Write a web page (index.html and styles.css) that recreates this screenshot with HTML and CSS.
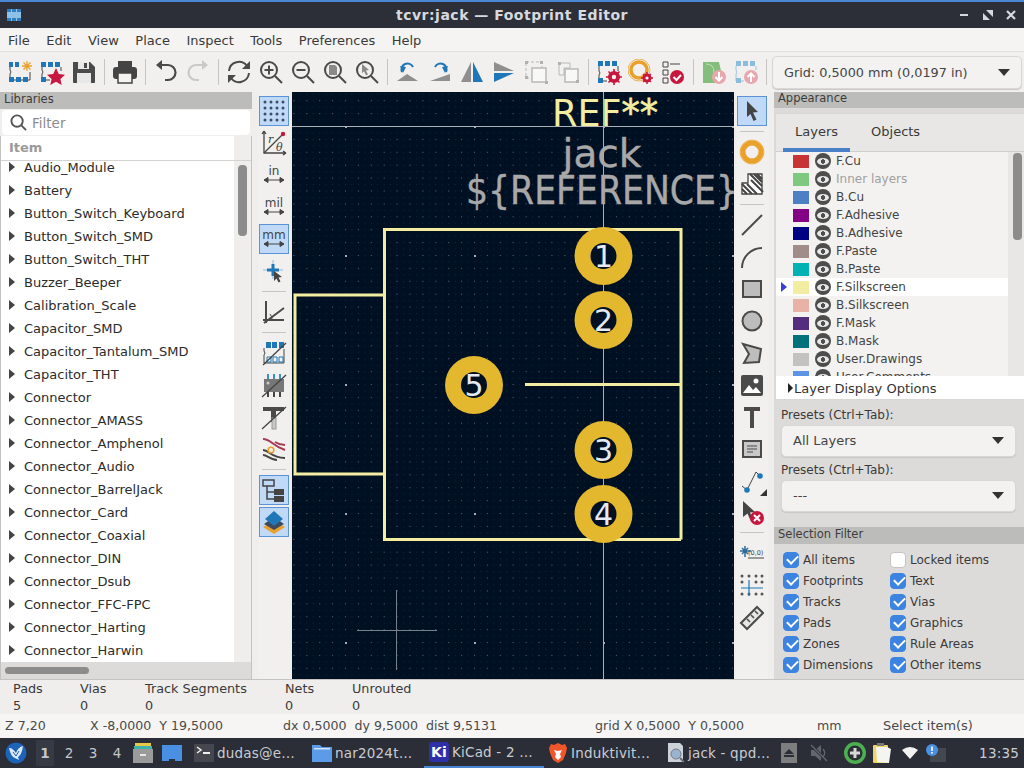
FILE: index.html
```html
<!DOCTYPE html>
<html lang="en">
<head>
<meta charset="utf-8">
<title>tcvr:jack — Footprint Editor</title>
<link rel="stylesheet" href="styles.css">
</head>
<body>
<div class="app">
  <header class="titlebar">
    <svg class="app-icon" width="18" height="18" viewBox="0 0 18 18"><rect x="2" y="3" width="14" height="12" fill="#8fc0e8"/><path d="M2 3h4v3H2zM7 3h4v3H7zM12 3h4v3h-4zM2 12h4v3H2zM7 12h4v3H7zM12 12h4v3h-4z" fill="#2f7fc0"/></svg>
    <div class="title">tcvr:jack — Footprint Editor</div>
    <div class="wm-buttons">
      <svg width="14" height="14" viewBox="0 0 14 14"><rect x="2" y="6" width="8" height="2" fill="#d5d8de"/></svg>
      <svg width="14" height="14" viewBox="0 0 14 14"><path d="M5 2h7v7zM2 5l7 7H2z" fill="#d5d8de"/></svg>
      <svg width="14" height="14" viewBox="0 0 14 14"><path d="M3 3l8 8M11 3l-8 8" stroke="#d5d8de" stroke-width="2.2"/></svg>
    </div>
  </header>

  <nav class="menubar">
    <span>File</span><span>Edit</span><span>View</span><span>Place</span><span>Inspect</span><span>Tools</span><span>Preferences</span><span>Help</span>
  </nav>

  <div class="toolbar">
    <button class="tb"><svg width="26" height="26" viewBox="0 0 26 26"><path d="M3 6v5q2 2 0 4v6h20V13" fill="none" stroke="#444" stroke-width="1"/><path d="M2 3h4v5H2zM8 3h4v5H8zM2 18h5v5H2zM9 18h5v5H9zM16 18h5v5h-5z" fill="#1f77b8"/><path d="M20 2v10M15 7h10M16.500 3.500l7 7M23.500 3.500l-7 7" stroke="#eaa12c" stroke-width="1.300"/></svg></button>
    <button class="tb"><svg width="26" height="26" viewBox="0 0 26 26"><path d="M3 6v5q2 2 0 4v6h8M22 8v4" fill="none" stroke="#444" stroke-width="1"/><path d="M2 3h5v5H2zM9 3h5v5H9zM16 3h5v5h-5zM2 18h5v5H2z" fill="#1f77b8"/><path d="M17 9l2.800 6 6.200.7-4.600 4.200 1.300 6-5.700-3.100-5.700 3.100 1.300-6L8 15.700l6.200-.7z" fill="#c8173f"/></svg></button>
    <button class="tb"><svg width="24" height="24" viewBox="0 0 24 24"><path d="M1 2h17l5 5v15a1 1 0 0 1-1 1H2a1 1 0 0 1-1-1z" fill="#4a4a4a"/><rect x="6" y="2" width="11" height="7" fill="#e8e8e8"/><rect x="12" y="3" width="3" height="5" fill="#4a4a4a"/><rect x="5" y="13" width="14" height="10" fill="#e8e8e8"/></svg></button>
    <i class="sep"></i>
    <button class="tb"><svg width="26" height="26" viewBox="0 0 26 26"><rect x="6" y="2" width="14" height="7" fill="#444"/><rect x="1" y="8" width="24" height="12" rx="3" fill="#444"/><rect x="6" y="14" width="14" height="10" fill="#f4f3f1" stroke="#444" stroke-width="1.500"/></svg></button>
    <i class="sep"></i>
    <button class="tb"><svg width="24" height="24" viewBox="0 0 24 24"><path d="M7 5h7a7.500 7.500 0 0 1 0 15h-3" fill="none" stroke="#4a4a4a" stroke-width="2.200"/><path d="M8 0v10L2 5z" fill="#4a4a4a"/></svg></button>
    <button class="tb"><svg width="24" height="24" viewBox="0 0 24 24"><path d="M17 5h-7a7.500 7.500 0 0 0 0 15h3" fill="none" stroke="#c9c9c7" stroke-width="2.200"/><path d="M16 0v10l6-5z" fill="#c9c9c7"/></svg></button>
    <i class="sep"></i>
    <button class="tb"><svg width="26" height="26" viewBox="0 0 26 26"><path d="M3 12a10 10 0 0 1 18-5M23 14a10 10 0 0 1-18 5" fill="none" stroke="#4a4a4a" stroke-width="2"/><path d="M24 2v8h-8zM2 24v-8h8z" fill="#4a4a4a"/></svg></button>
    <button class="tb"><svg width="24" height="24" viewBox="0 0 24 24"><circle cx="10" cy="10" r="8" fill="none" stroke="#4a4a4a" stroke-width="2"/><path d="M16 16l7 7M10 5.500v9M5.500 10h9" stroke="#4a4a4a" stroke-width="2"/></svg></button>
    <button class="tb"><svg width="24" height="24" viewBox="0 0 24 24"><circle cx="10" cy="10" r="8" fill="none" stroke="#4a4a4a" stroke-width="2"/><path d="M16 16l7 7M5.500 10h9" stroke="#4a4a4a" stroke-width="2"/></svg></button>
    <button class="tb"><svg width="24" height="24" viewBox="0 0 24 24"><circle cx="10" cy="10" r="8" fill="none" stroke="#4a4a4a" stroke-width="2"/><path d="M16 16l7 7" stroke="#4a4a4a" stroke-width="2"/><path d="M6 5h6l2 2v8H6z" fill="#8a8a8a"/></svg></button>
    <button class="tb"><svg width="24" height="24" viewBox="0 0 24 24"><circle cx="10" cy="10" r="8" fill="none" stroke="#4a4a4a" stroke-width="2"/><path d="M16 16l7 7" stroke="#4a4a4a" stroke-width="2"/><path d="M7 4l7 6-3 .5 2 4-2 .8-2-4-2 2z" fill="#8a8a8a"/></svg></button>
    <i class="sep"></i>
    <button class="tb"><svg width="24" height="24" viewBox="0 0 24 24"><path d="M1 21l10-7 11 7z" fill="#8f8f8f"/><path d="M6 11a6 6 0 0 1 11-5" fill="none" stroke="#1f77b8" stroke-width="2" transform="translate(0 1)"/><path d="M4 6l6 1-3 6z" fill="#1f77b8"/></svg></button>
    <button class="tb"><svg width="24" height="24" viewBox="0 0 24 24"><path d="M2 21l20-7v7z" fill="#8f8f8f"/><path d="M18 11a6 6 0 0 0-11-5" fill="none" stroke="#1f77b8" stroke-width="2" transform="translate(0 1)"/><path d="M20 6l-6 1 3 6z" fill="#1f77b8"/></svg></button>
    <button class="tb"><svg width="24" height="24" viewBox="0 0 24 24"><path d="M11 2v20H1z" fill="#8f8f8f"/><path d="M13 2v20h10z" fill="#1f77b8"/></svg></button>
    <button class="tb"><svg width="24" height="24" viewBox="0 0 24 24"><path d="M2 2v9h20z" fill="#8f8f8f"/><path d="M2 22v-9h20z" fill="#1f77b8"/></svg></button>
    <button class="tb"><svg width="24" height="24" viewBox="0 0 24 24"><rect x="2" y="2" width="16" height="16" fill="none" stroke="#b8b8b6" stroke-dasharray="3 2"/><rect x="8" y="8" width="14" height="14" fill="#f8f8f7" stroke="#b8b8b6" stroke-width="1.500"/><path d="M1 1h3v3H1zM16 1h3v3h-3zM1 16h3v3H1zM21 21h3v3h-3z" fill="#b0b0ae"/></svg></button>
    <button class="tb"><svg width="24" height="24" viewBox="0 0 24 24"><path d="M3 3h11v5H8v7H3z" fill="#f2f2f0" stroke="#b8b8b6"/><rect x="9" y="9" width="13" height="13" fill="#f8f8f7" stroke="#b8b8b6" stroke-width="1.500"/><path d="M2 2h3v3H2zM20 20h3v3h-3z" fill="#b0b0ae"/></svg></button>
    <i class="sep"></i>
    <button class="tb"><svg width="26" height="26" viewBox="0 0 26 26"><path d="M3 7v5q2 2 0 4v6h8M22 7v5" fill="none" stroke="#444"/><path d="M2 2h5v5H2zM9 2h5v5H9zM16 2h5v5h-5zM2 19h5v5H2z" fill="#1f77b8"/><circle cx="18" cy="18" r="6" fill="#c8173f"/><path d="M18 10v16M10 18h16M12.500 12.500l11 11M23.500 12.500l-11 11" stroke="#c8173f" stroke-width="1.600"/><circle cx="18" cy="18" r="2.200" fill="#f4f3f1"/></svg></button>
    <button class="tb"><svg width="26" height="26" viewBox="0 0 26 26"><circle cx="11" cy="11" r="8" fill="none" stroke="#eaa12c" stroke-width="3.500"/><circle cx="11" cy="11" r="11" fill="none" stroke="#eaa12c" stroke-width=".8"/><circle cx="19" cy="19" r="4.500" fill="#c8173f"/><path d="M19 13v12M13 19h12M15 15l8 8M23 15l-8 8" stroke="#c8173f" stroke-width="1.400"/><circle cx="19" cy="19" r="1.600" fill="#f4f3f1"/></svg></button>
    <button class="tb"><svg width="26" height="26" viewBox="0 0 26 26"><path d="M3 3h5v5H3zM3 11h5v5H3zM3 19h5v5H3z" fill="none" stroke="#444"/><path d="M10 5h10" stroke="#444"/><circle cx="17" cy="18" r="7" fill="#c8173f"/><path d="M13.500 18l3 3 4.500-5" fill="none" stroke="#fff" stroke-width="2"/></svg></button>
    <i class="sep"></i>
    <button class="tb"><svg width="26" height="26" viewBox="0 0 26 26"><path d="M2 3h16l2 9-6 12H2z" fill="#84bd7c"/><path d="M5 5q8 0 8 8t6 2" fill="none" stroke="#bfe0b9"/><circle cx="18" cy="18" r="7" fill="#e8a7ad"/><path d="M18 13v8M14.500 18l3.500 3.500 3.500-3.500" fill="none" stroke="#fff" stroke-width="2"/></svg></button>
    <button class="tb"><svg width="26" height="26" viewBox="0 0 26 26"><path d="M3 7v4q2 2 0 4v7h8M23 7v4" fill="none" stroke="#9cc5e0"/><path d="M3 2h5v5H3zM10 2h5v5h-5zM17 2h5v5h-5zM3 19h5v5H3z" fill="#8cbcdc"/><circle cx="18" cy="18" r="7" fill="#e8a7ad"/><path d="M18 23v-8M14.500 18l3.500-3.500 3.500 3.500" fill="none" stroke="#fff" stroke-width="2"/></svg></button>
    <i class="sep"></i>
    <div class="combo combo-grid"><span>Grid: 0,5000 mm (0,0197 in)</span><i class="caret"></i></div>
  </div>

  <main class="main">
    <aside class="libs">
      <div class="panel-title">Libraries</div>
      <div class="filter">
        <svg width="17" height="17" viewBox="0 0 18 18"><circle cx="7.500" cy="7.500" r="6" fill="none" stroke="#555" stroke-width="2"/><path d="M12 12l5 5" stroke="#555" stroke-width="2"/></svg>
        <span>Filter</span>
      </div>
      <div class="tree">
        <div class="tree-head"><span>Item</span></div>
        <div class="tree-body">
          <ul class="tree-list">
            <li>Audio_Module</li><li>Battery</li><li>Button_Switch_Keyboard</li><li>Button_Switch_SMD</li><li>Button_Switch_THT</li><li>Buzzer_Beeper</li><li>Calibration_Scale</li><li>Capacitor_SMD</li><li>Capacitor_Tantalum_SMD</li><li>Capacitor_THT</li><li>Connector</li><li>Connector_AMASS</li><li>Connector_Amphenol</li><li>Connector_Audio</li><li>Connector_BarrelJack</li><li>Connector_Card</li><li>Connector_Coaxial</li><li>Connector_DIN</li><li>Connector_Dsub</li><li>Connector_FFC-FPC</li><li>Connector_Harting</li><li>Connector_Harwin</li>
          </ul>
          <div class="vscroll"><div class="vthumb"></div></div>
        </div>
        <div class="hscroll"><div class="hthumb"></div></div>
      </div>
    </aside>

    <div class="vtools vtools-left">
      <button class="vt on"><svg width="26" height="26" viewBox="0 0 26 26" fill="#3c4f68"><circle cx="4" cy="4" r="1.500"/><circle cx="10" cy="4" r="1.500"/><circle cx="16" cy="4" r="1.500"/><circle cx="22" cy="4" r="1.500"/><circle cx="4" cy="10" r="1.500"/><circle cx="10" cy="10" r="1.500"/><circle cx="16" cy="10" r="1.500"/><circle cx="22" cy="10" r="1.500"/><circle cx="4" cy="16" r="1.500"/><circle cx="10" cy="16" r="1.500"/><circle cx="16" cy="16" r="1.500"/><circle cx="22" cy="16" r="1.500"/><circle cx="4" cy="22" r="1.500"/><circle cx="10" cy="22" r="1.500"/><circle cx="16" cy="22" r="1.500"/><circle cx="22" cy="22" r="1.500"/></svg></button>
      <button class="vt"><svg width="26" height="26" viewBox="0 0 26 26"><path d="M3 1v22h22M3 1L1 4M3 1l2 3M25 23l-3-2M25 23l-3 2" fill="none" stroke="#444" stroke-width="1.300"/><path d="M3 23L21 5" stroke="#444" stroke-width="1.300"/><circle cx="22" cy="4" r="2.200" fill="#c8173f"/><text class="ico-serif" x="7" y="13">r</text><text class="ico-serif" x="15" y="21">θ</text></svg></button>
      <button class="vt"><svg width="26" height="26" viewBox="0 0 26 26"><text class="ico-unit" x="13" y="13">in</text><path d="M3 18h20M3 18l4-2.500v5zM23 18l-4-2.500v5z" fill="#444" stroke="#444"/></svg></button>
      <button class="vt"><svg width="26" height="26" viewBox="0 0 26 26"><text class="ico-unit" x="13" y="13">mil</text><path d="M3 18h20M3 18l4-2.500v5zM23 18l-4-2.500v5z" fill="#444" stroke="#444"/></svg></button>
      <button class="vt on"><svg width="26" height="26" viewBox="0 0 26 26"><text class="ico-unit" x="13" y="13">mm</text><path d="M3 18h20M3 18l4-2.500v5zM23 18l-4-2.500v5z" fill="#444" stroke="#444"/></svg></button>
      <button class="vt"><svg width="26" height="26" viewBox="0 0 26 26"><path d="M12 2v19M2 12h20" stroke="#8fbbd8" stroke-width="1"/><path d="M12 6v12M6 12h12" stroke="#1f77b8" stroke-width="3"/><path d="M13 13l8 6-3.500.5 2 4-2 1-2-4-2.500 2.500z" fill="#444"/></svg></button>
      <i class="hsep"></i>
      <button class="vt"><svg width="26" height="26" viewBox="0 0 26 26"><path d="M5 2v22M2 21h21" stroke="#4a4a4a" stroke-width="2"/><path d="M3 24L23 9" stroke="#4a4a4a" stroke-width="2"/><path d="M11 21a8 8 0 0 0-2-6" fill="none" stroke="#4a4a4a"/></svg></button>
      <i class="hsep"></i>
      <button class="vt"><svg width="26" height="26" viewBox="0 0 26 26"><path d="M3 8v3q2 2 0 4v8h20V9" fill="none" stroke="#444"/><path d="M5 2h5v6H5zM11 2h5v6h-5zM18 2h5v6h-5z" fill="#1f77b8"/><path d="M6 17h4v5H6zM12 17h4v5h-4zM18 17h4v5h-4z" fill="#f4f3f1" stroke="#1f77b8"/><path d="M2 25L25 3" stroke="#444" stroke-width="1.300"/></svg></button>
      <button class="vt"><svg width="26" height="26" viewBox="0 0 26 26"><rect x="3" y="7" width="20" height="13" fill="#777"/><path d="M7 2v5M13 2v5M19 2v5" stroke="#3a8fc8" stroke-width="2"/><path d="M7 20v5M13 20v5M19 20v5" stroke="#444" stroke-width="2"/><circle cx="7" cy="11" r="1.500" fill="#ccc"/><path d="M1 25L25 3" stroke="#444" stroke-width="1.300"/></svg></button>
      <button class="vt"><svg width="26" height="26" viewBox="0 0 26 26"><path d="M2 3h21v4h-8v11h-5V7H2z" fill="#4a4a4a"/><rect x="11" y="14" width="4" height="11" fill="#c8c8c8" stroke="#999"/><path d="M1 25L25 3" stroke="#444" stroke-width="1.300"/></svg></button>
      <button class="vt"><svg width="26" height="26" viewBox="0 0 26 26"><path d="M2 3c8 0 8 6 22 11" fill="none" stroke="#a83a58" stroke-width="2"/><path d="M2 14c6 0 8 8 22 8" fill="none" stroke="#444" stroke-width="2"/><path d="M14 6c3 2 6 3 10 3" fill="none" stroke="#a83a58" stroke-width="2"/><path d="M2 19c4 0 8 5 14 5" fill="none" stroke="#444" stroke-width="2"/><circle cx="10" cy="14" r="2.800" fill="#f4f3f1" stroke="#eaa12c" stroke-width="1.600"/></svg></button>
      <i class="hsep"></i>
      <button class="vt on"><svg width="26" height="26" viewBox="0 0 26 26" fill="#444"><rect x="2" y="3" width="11" height="6" fill="none" stroke="#444" stroke-width="1.500"/><path d="M6 9v13h7M6 15h7" fill="none" stroke="#444" stroke-width="1.500"/><rect x="13" y="12" width="10" height="6"/><rect x="13" y="19" width="10" height="6"/></svg></button>
      <button class="vt on"><svg width="26" height="26" viewBox="0 0 26 26"><path d="M13 12l11 6-11 7-11-7z" fill="#eaa12c"/><path d="M13 8l10 7-10 6-10-6z" fill="#3f4a5a"/><path d="M13 2l9 8-9 7-9-7z" fill="#1f77b8"/></svg></button>
    </div>

    <div class="canvas">
      <svg class="board" width="442" height="588" viewBox="292 92 442 588">
        <defs>
          <pattern id="g1" patternUnits="userSpaceOnUse" x="603" y="126" width="6.450" height="6.450"><rect width="1" height="1" class="dot-faint"/></pattern>
          <pattern id="g2" patternUnits="userSpaceOnUse" x="603" y="126" width="12.900" height="12.900"><rect width="1" height="1" class="dot-mid"/></pattern>
          <pattern id="g3" patternUnits="userSpaceOnUse" x="603" y="126" width="129" height="129"><rect width="2" height="2" class="dot-hi"/></pattern>
        </defs>
        <rect class="bg" x="292" y="92" width="442" height="588"/>
        <rect x="292" y="92" width="442" height="588" fill="url(#g1)"/>
        <rect x="292" y="92" width="442" height="588" fill="url(#g2)"/>
        <rect x="292" y="92" width="442" height="588" fill="url(#g3)"/>
        <path class="axis" d="M292 126.500H734M603.500 92V680"/>
        <path class="cross" d="M396.500 590V670M357 630.500H437"/>
        <text class="ref" x="552" y="126" textLength="106" lengthAdjust="spacingAndGlyphs">REF<tspan class="ref-star">**</tspan></text>
        <text class="fab fab-c" x="602" y="167">jack</text>
        <text class="fab" x="466" y="204" textLength="272" lengthAdjust="spacingAndGlyphs">${REFERENCE}</text>
        <path class="silk" d="M681 539.500H384.500V229.500H681V539.500M384.500 295H295V474H384.500M525 384.500H681"/>
        <circle class="pad" cx="603.500" cy="256" r="29"/><circle class="hole" cx="603.500" cy="256" r="13"/>
        <circle class="pad" cx="603.500" cy="320" r="29"/><circle class="hole" cx="603.500" cy="320" r="13"/>
        <circle class="pad" cx="474" cy="385" r="29"/><circle class="hole" cx="474" cy="385" r="13"/>
        <circle class="pad" cx="603.500" cy="450" r="29"/><circle class="hole" cx="603.500" cy="450" r="13"/>
        <circle class="pad" cx="603.500" cy="514" r="29"/><circle class="hole" cx="603.500" cy="514" r="13"/>
        <text class="num" x="603.500" y="267">1</text>
        <text class="num" x="603.500" y="331">2</text>
        <text class="num" x="474" y="396">5</text>
        <text class="num" x="603.500" y="461">3</text>
        <text class="num" x="603.500" y="525">4</text>
      </svg>
    </div>

    <div class="vtools vtools-right">
      <button class="vt on"><svg width="26" height="26" viewBox="0 0 26 26"><path d="M8 3l11 11-5 .5 3.500 7-3 1.500-3-7L8 19z" fill="#444"/></svg></button>
      <i class="hsep"></i>
      <button class="vt"><svg width="26" height="26" viewBox="0 0 26 26"><circle cx="13" cy="13" r="9" fill="none" stroke="#eaa12c" stroke-width="5"/><circle cx="13" cy="13" r="12" fill="none" stroke="#eaa12c" stroke-width=".8"/></svg></button>
      <button class="vt"><svg width="26" height="26" viewBox="0 0 26 26"><path d="M9 3h14v20H3V12h6z" fill="#fff" stroke="#444" stroke-width="1.300"/><path d="M11 3l12 12M15 3l8 8M3 13l10 10M3 18l5 5M8 13l10 10M12 9l12 12M18 3l5 5" stroke="#444" stroke-width="2"/></svg></button>
      <i class="hsep"></i>
      <button class="vt"><svg width="26" height="26" viewBox="0 0 26 26"><path d="M3 23L23 3" stroke="#4a4a4a" stroke-width="2"/></svg></button>
      <button class="vt"><svg width="26" height="26" viewBox="0 0 26 26"><path d="M3 24C3 13 12 4 23 4" fill="none" stroke="#4a4a4a" stroke-width="2"/></svg></button>
      <button class="vt"><svg width="26" height="26" viewBox="0 0 26 26"><rect x="4" y="5" width="18" height="16" fill="#bdbdbd" stroke="#4a4a4a" stroke-width="2"/></svg></button>
      <button class="vt"><svg width="26" height="26" viewBox="0 0 26 26"><circle cx="13" cy="13" r="9.500" fill="#bdbdbd" stroke="#4a4a4a" stroke-width="2"/></svg></button>
      <button class="vt"><svg width="26" height="26" viewBox="0 0 26 26"><path d="M4 4l18 5-2 13-15 1 5-9z" fill="#bdbdbd" stroke="#4a4a4a" stroke-width="2"/></svg></button>
      <button class="vt"><svg width="26" height="26" viewBox="0 0 26 26"><rect x="2" y="3" width="22" height="21" rx="2" fill="#4a4a4a"/><circle cx="17" cy="9" r="2.500" fill="#fff"/><path d="M4 21l6-8 4 5 3-3 5 6z" fill="#fff"/></svg></button>
      <button class="vt"><svg width="26" height="26" viewBox="0 0 26 26"><path d="M5 3h16v4h-6v17h-4V7H5z" fill="#4a4a4a"/></svg></button>
      <button class="vt"><svg width="26" height="26" viewBox="0 0 26 26"><rect x="4" y="5" width="18" height="16" fill="#c8c8c8" stroke="#4a4a4a" stroke-width="2"/><path d="M8 10h10M8 13h10M8 16h6" stroke="#4a4a4a"/></svg></button>
      <button class="vt"><svg width="26" height="26" viewBox="0 0 26 26"><path d="M8 22L17 4l4 4" fill="none" stroke="#444"/><path d="M3 18l5 4" stroke="#444"/><circle cx="21" cy="8" r="2.800" fill="#1f77b8"/><circle cx="8" cy="22" r="2.800" fill="#1f77b8"/><path d="M28 21v7h-7z" fill="#333"/></svg></button>
      <button class="vt"><svg width="26" height="26" viewBox="0 0 26 26"><path d="M4 1l12 11-5 .5 3 7-2.500 1-3-7L4 17z" fill="#444"/><circle cx="18" cy="18" r="7" fill="#c8173f"/><path d="M15 15l6 6M21 15l-6 6" stroke="#fff" stroke-width="2"/></svg></button>
      <i class="hsep hsep-s"></i>
      <button class="vt"><svg width="26" height="26" viewBox="0 0 26 26"><path d="M6 6v11M1 11h11M3 8l6 6M9 8l-6 6" stroke="#2c6d9e" stroke-width="1.500"/><text class="ico-origin" x="9" y="15">(0,0)</text><path d="M9 18h16" stroke="#444"/></svg></button>
      <button class="vt"><svg width="26" height="26" viewBox="0 0 26 26" fill="#555"><circle cx="3" cy="4" r="1.500"/><circle cx="10" cy="4" r="1.500"/><circle cx="17" cy="4" r="1.500"/><circle cx="23" cy="4" r="1.500"/><circle cx="3" cy="10" r="1.500"/><circle cx="17" cy="10" r="1.500"/><circle cx="23" cy="10" r="1.500"/><circle cx="3" cy="22" r="1.500"/><circle cx="10" cy="22" r="1.500"/><circle cx="17" cy="22" r="1.500"/><circle cx="23" cy="22" r="1.500"/><path d="M2 16h22M10 8v16" stroke="#1f77b8" stroke-width="1.200"/></svg></button>
      <button class="vt"><svg width="26" height="26" viewBox="0 0 26 26"><path d="M2 19L18 3l6 6L8 25z" fill="#e6e6e4" stroke="#4a4a4a" stroke-width="2"/><path d="M8 15l3 3M12 11l3 3M16 7l3 3" stroke="#4a4a4a" stroke-width="1.500"/></svg></button>
    </div>

    <aside class="side">
      <div class="panel-title panel-title-a">Appearance</div>
      <section class="notebook">
        <div class="tabs"><span class="tab tab-on">Layers</span><span class="tab">Objects</span></div>
        <div class="layers">
          <ul class="layer-list">
            <li><i class="sw c1"></i><i class="eye"></i>F.Cu</li>
            <li class="dim"><i class="sw c2"></i><i class="eye"></i>Inner layers</li>
            <li><i class="sw c3"></i><i class="eye"></i>B.Cu</li>
            <li><i class="sw c4"></i><i class="eye"></i>F.Adhesive</li>
            <li><i class="sw c5"></i><i class="eye"></i>B.Adhesive</li>
            <li><i class="sw c6"></i><i class="eye"></i>F.Paste</li>
            <li><i class="sw c7"></i><i class="eye"></i>B.Paste</li>
            <li class="cur"><b class="mark"></b><i class="sw c8"></i><i class="eye"></i>F.Silkscreen</li>
            <li><i class="sw c9"></i><i class="eye"></i>B.Silkscreen</li>
            <li><i class="sw c10"></i><i class="eye"></i>F.Mask</li>
            <li><i class="sw c11"></i><i class="eye"></i>B.Mask</li>
            <li><i class="sw c12"></i><i class="eye"></i>User.Drawings</li>
            <li><i class="sw c13"></i><i class="eye"></i>User.Comments</li>
          </ul>
          <div class="layer-scroll"><div class="layer-thumb"></div></div>
        </div>
        <div class="disp-opts"><b class="disp-arrow"></b>Layer Display Options</div>
      </section>
      <div class="presets">
        <label>Presets (Ctrl+Tab):</label>
        <div class="combo"><span>All Layers</span><i class="caret"></i></div>
        <label class="lbl2">Presets (Ctrl+Tab):</label>
        <div class="combo"><span>---</span><i class="caret"></i></div>
      </div>
      <div class="panel-title">Selection Filter</div>
      <div class="filters">
        <div class="chk"><i class="cb on"></i>All items</div><div class="chk"><i class="cb"></i>Locked items</div>
        <div class="chk"><i class="cb on"></i>Footprints</div><div class="chk"><i class="cb on"></i>Text</div>
        <div class="chk"><i class="cb on"></i>Tracks</div><div class="chk"><i class="cb on"></i>Vias</div>
        <div class="chk"><i class="cb on"></i>Pads</div><div class="chk"><i class="cb on"></i>Graphics</div>
        <div class="chk"><i class="cb on"></i>Zones</div><div class="chk"><i class="cb on"></i>Rule Areas</div>
        <div class="chk"><i class="cb on"></i>Dimensions</div><div class="chk"><i class="cb on"></i>Other items</div>
      </div>
    </aside>
  </main>

  <div class="msgpanel">
    <div class="msg m1"><span>Pads</span><span>5</span></div>
    <div class="msg m2"><span>Vias</span><span>0</span></div>
    <div class="msg m3"><span>Track Segments</span><span>0</span></div>
    <div class="msg m4"><span>Nets</span><span>0</span></div>
    <div class="msg m5"><span>Unrouted</span><span>0</span></div>
  </div>

  <div class="status">
    <span class="s1">Z 7,20</span>
    <span class="s2">X -8,0000&nbsp;&nbsp;Y 19,5000</span>
    <span class="s3">dx 0,5000&nbsp;&nbsp;dy 9,5000&nbsp;&nbsp;dist 9,5131</span>
    <span class="s4">grid X 0,5000&nbsp;&nbsp;Y 0,5000</span>
    <span class="s5">mm</span>
    <span class="s6">Select item(s)</span>
  </div>

  <footer class="taskbar">
    <svg class="tk-logo" width="22" height="22" viewBox="0 0 22 22"><circle cx="11" cy="11" r="10.500" fill="#1d63b8"/><path d="M4 6c3 0 5 2 7 5 1-3 3-6 7-7-1 6-2 9-5 11l1 3-4-2c-3-1-5-5-6-10z" fill="#dce8f6"/><path d="M8 10l3 4 3-5" stroke="#1d63b8" fill="none"/></svg>
    <div class="ws ws-on">1</div><div class="ws">2</div><div class="ws">3</div><div class="ws">4</div>
    <svg class="tk-fm" width="22" height="22" viewBox="0 0 22 22"><rect x="1" y="7" width="20" height="14" fill="#9b9b9b"/><rect x="3" y="1" width="16" height="3" fill="#e8c84a"/><rect x="2" y="4" width="18" height="3" fill="#3fb3a8"/><rect x="8" y="12" width="6" height="2" fill="#e8e8e8"/></svg>
    <svg class="tk-desk" width="22" height="22" viewBox="0 0 22 22"><path d="M1 3h20v16h-7v-2H8v2H1z" fill="#4a90e2"/></svg>
    <div class="task t-term"><svg width="20" height="20" viewBox="0 0 20 20"><rect width="20" height="18" y="1" fill="#44474e"/><path d="M3 4l4 3-4 3" fill="none" stroke="#eee" stroke-width="1.500"/><path d="M9 10h7" stroke="#eee" stroke-width="2"/></svg><span>dudas@e…</span></div>
    <div class="task t-dir"><svg width="20" height="20" viewBox="0 0 20 20"><path d="M0 2h8l2 2h10v15H0z" fill="#5b9be8"/><rect y="5" x="2" width="16" height="1.500" fill="#cfe2f8"/></svg><span>nar2024t…</span></div>
    <div class="task t-kicad"><svg width="20" height="20" viewBox="0 0 20 20"><rect width="20" height="20" rx="3" fill="#2f2fa8"/><text class="ki" x="10" y="15">Ki</text></svg><span>KiCad - 2 …</span></div>
    <div class="task t-brave"><svg width="20" height="22" viewBox="0 0 20 22"><path d="M3 2l3 1 4-2 4 2 3-1 2 4-1 5-3 7-5 3-5-3-3-7-1-5z" fill="#f1562b"/><path d="M6 8l4 1 4-1-2 4 1 3-3 3-3-3 1-3z" fill="#fff"/></svg><span>Induktivit…</span></div>
    <div class="task t-pdf"><svg width="20" height="22" viewBox="0 0 20 22"><path d="M2 1h12l3 3v16H2z" fill="#ccd2d9"/><circle cx="10" cy="12" r="5" fill="#9ab4cf" stroke="#778"/><path d="M14 16l4 4" stroke="#667" stroke-width="2"/></svg><span>jack - qpd…</span></div>
    <div class="tray">
      <div class="tr-eject"><i class="tr-up"></i><i class="tr-bar"></i></div>
      <svg class="tr-mute" width="20" height="20" viewBox="0 0 20 20"><path d="M2 7h4l6-5v16l-6-5H2z" fill="#62656c"/><path d="M2 2l16 16" stroke="#2b2e37" stroke-width="3"/><path d="M2 2l16 16" stroke="#62656c" stroke-width="1.500"/><path d="M14 6a6 6 0 0 1 0 8" fill="none" stroke="#62656c" stroke-width="1.500"/></svg>
      <svg class="tr-green" width="22" height="22" viewBox="0 0 22 22"><circle cx="11" cy="11" r="11" fill="#4caf50"/><circle cx="11" cy="11" r="7.500" fill="#2c2f33"/><path d="M11 6v10M6 11h10" stroke="#d8d8d8" stroke-width="3"/></svg>
      <svg class="tr-clip" width="20" height="22" viewBox="0 0 20 22"><rect x="1" y="3" width="15" height="18" rx="1" fill="#f0d56a"/><path d="M4 5h11l4 2-2 14-12-1z" fill="#f4f4f0"/><rect x="5" y="1" width="7" height="3" fill="#777"/></svg>
      <svg class="tr-wifi" width="16" height="14" viewBox="0 0 16 14"><path d="M0 4q8-6 16 0L8 13z" fill="#f2f2f2"/></svg>
      <svg class="tr-note" width="20" height="18" viewBox="0 0 20 18"><rect x="4" y="4" width="16" height="14" fill="#44474e"/><circle cx="6" cy="6" r="6" fill="#4a90e2"/><rect x="5.200" y="2.500" width="1.600" height="4.500" fill="#fff"/><rect x="5.200" y="8" width="1.600" height="1.600" fill="#fff"/></svg>
      <span class="clock">13:35</span>
    </div>
  </footer>
</div>
</body>
</html>
```

FILE: styles.css
```css
* { box-sizing: border-box; }
html, body { margin: 0; padding: 0; height: 100%; overflow: hidden; }
body { font-family: "DejaVu Sans", sans-serif; font-size: 13px; color: #3a3a3a; background: #efeeec; }
button { margin: 0; padding: 0; border: 0; background: none; font: inherit; }
ul { list-style: none; margin: 0; padding: 0; }
i, b { font-style: normal; display: block; }

.app { width: 1024px; height: 768px; display: flex; flex-direction: column; }

/* title */
.titlebar { height: 28px; flex: none; border-top: 2px solid #4a86d4; background: #2d2f38; display: flex; align-items: center; position: relative; padding: 0 5px; }
.title { position: absolute; left: 0; right: 0; top: 5px; text-align: center; color: #d6d9df; font-weight: bold; font-size: 14px; letter-spacing: .5px; line-height: 16px; }
.wm-buttons { margin-left: auto; display: flex; gap: 9px; padding-right: 1px; }
.wm-buttons svg { display: block; }

/* menu */
.menubar { height: 24px; flex: none; background: #f5f4f2; display: flex; align-items: center; padding: 1px 0 0 8px; gap: 16.500px; font-size: 13px; border-bottom: 1px solid #e0dfdd; }

/* toolbar */
.toolbar { height: 40px; flex: none; background: #f1f0ee; display: flex; align-items: center; padding-left: 4px; }
.tb { width: 32px; height: 32px; display: flex; align-items: center; justify-content: center; flex: none; }
.sep { width: 9px; height: 26px; flex: none; position: relative; }
.sep::after { content: ""; position: absolute; left: 4px; top: 0; bottom: 0; width: 1px; background: #c6c5c3; }

.combo { background: #f3f2f0; border: 1px solid #d8d7d5; border-radius: 5px; box-shadow: 0 1px 1px #c8c7c5; display: flex; align-items: center; padding: 0 11px 2px; justify-content: space-between; height: 32px; font-size: 13px; color: #444; }
.combo-grid { width: 250px; margin-left: 1px; height: 33px; font-size: 12.800px; padding-bottom: 0; }
.caret { width: 0; height: 0; border-left: 6px solid transparent; border-right: 6px solid transparent; border-top: 7px solid #333; }

/* main */
.main { height: 588px; flex: none; display: flex; background: #efeeec; }

.libs { width: 252px; flex: none; display: flex; flex-direction: column; }
.panel-title { height: 17px; flex: none; background: #bcbcba; font-size: 11.500px; color: #3c3c3c; padding-left: 4px; line-height: 15px; }
.panel-title-a { height: 16px; line-height: 13px; }
.filter { height: 25px; flex: none; margin: 1px 2px 0; background: #fff; border-radius: 4px; display: flex; align-items: center; gap: 5px; padding-left: 8px; color: #8c8c8c; font-size: 13.500px; }
.tree { flex: 1; min-height: 0; display: flex; flex-direction: column; background: #fff; border: 1px solid #c4c3c1; border-top: 0; margin-top: 1px; overflow: hidden; }
.tree-head { height: 25px; flex: none; background: linear-gradient(90deg, #fff 233px, #efeeec 233px); border-bottom: 1px solid #d4d3d1; font-weight: bold; color: #9a9a9a; padding: 4px 0 0 8px; }
.tree-body { flex: 1; min-height: 0; display: flex; overflow: hidden; }
.tree-list { flex: 1; margin-top: -5px; color: #2b2b2b; }
.tree-list li { height: 23px; line-height: 23px; padding-left: 23px; position: relative; white-space: nowrap; font-size: 13px; }
.tree-list li::before { content: ""; position: absolute; left: 8px; top: 6px; border-left: 6px solid #444; border-top: 5.500px solid transparent; border-bottom: 5.500px solid transparent; }
.vscroll { width: 17px; flex: none; background: #efeeec; padding: 4px 4px 0; }
.vthumb { height: 71px; border-radius: 4px; background: #8c8c8c; }
.hscroll { height: 17px; flex: none; background: #dcdbd9; padding: 5px 4px; }
.hthumb { width: 84px; height: 7px; border-radius: 4px; background: #8c8c8c; }

.vtools { flex: none; display: flex; flex-direction: column; align-items: center; padding-top: 3px; background: #f1f0ee; width: 32px; }
.vtools-left { margin-left: 6px; margin-right: 2px; }
.vtools-right { margin-left: 2px; }
.vt { width: 30px; height: 30px; margin: 1px 0; flex: none; display: flex; align-items: center; justify-content: center; border: 1px solid transparent; overflow: visible; }
.vt svg { overflow: visible; }
.vt.on { background: #bfd9f7; border-color: #5a94d6; }
.hsep { height: 9px; flex: none; width: 24px; position: relative; }
.hsep::after { content: ""; position: absolute; left: 0; right: 0; top: 4px; height: 1px; background: #c6c5c3; }
.hsep-s { height: 8px; }
.hsep-s::after { top: 3px; }
.ico-serif { font-family: "DejaVu Serif", serif; font-style: italic; font-size: 11px; fill: #444; }
.ico-unit { font-family: "DejaVu Sans", sans-serif; font-size: 12px; fill: #444; text-anchor: middle; }
.ico-origin { font-family: "DejaVu Sans", sans-serif; font-size: 6.500px; fill: #444; }

.canvas { width: 442px; flex: none; }
.board { display: block; }
.bg { fill: #001023; }
.dot-faint { fill: #16263a; }
.dot-mid { fill: #4f5e6e; }
.dot-hi { fill: #a4adb6; }
.axis { stroke: #aab2b8; stroke-width: 1; fill: none; }
.cross { stroke: #77818c; stroke-width: 1; fill: none; }
.silk { stroke: #f2eda1; stroke-width: 3; fill: none; }
.pad { fill: #e3b72e; }
.hole { fill: #001023; }
.ref { font-family: "DejaVu Sans", sans-serif; font-size: 38px; fill: #f2eda1; }
.ref-star { stroke: #f2eda1; stroke-width: .7px; }
.fab { font-family: "DejaVu Sans", sans-serif; font-size: 39px; fill: #a8a8a8; stroke: #a8a8a8; stroke-width: .4px; }
.fab-c { text-anchor: middle; }
.num { font-family: "DejaVu Sans", sans-serif; font-size: 30px; fill: #e6eaf0; text-anchor: middle; }

/* right */
.side { flex: 1; min-width: 0; margin-left: 6px; background: #dcdbd9; display: flex; flex-direction: column; }
.notebook { height: 287px; flex: none; margin: 5px 0 0 1px; background: #e8e7e5; border: 1px solid #d8d7d5; border-right: 0; display: flex; flex-direction: column; }
.tabs { height: 38px; flex: none; display: flex; align-items: center; padding: 0 0 3px 19px; gap: 33px; position: relative; font-size: 13px; border-bottom: 1px solid #d0cfcd; }
.tab-on::after { content: ""; position: absolute; left: 7px; width: 67px; height: 4px; bottom: -1px; background: #4a80c8; }
.layers { height: 224px; flex: none; display: flex; overflow: hidden; background: #f3f2f0; }
.layer-list { flex: 1; }
.layer-list li { height: 18px; display: flex; align-items: center; padding-left: 17px; position: relative; font-size: 12px; color: #444; }
.layer-list li.dim { color: #a0a0a0; }
.layer-list li.cur { background: #fff; }
.mark { position: absolute; left: 5px; top: 4px; border-left: 6px solid #3a3fd0; border-top: 5px solid transparent; border-bottom: 5px solid transparent; }
.sw { width: 16px; height: 13px; flex: none; margin-right: 6px; }
.eye { width: 16px; height: 16px; flex: none; margin-right: 5px; border-radius: 50%; background: #4d4d4d; position: relative; }
.eye::after { content: ""; position: absolute; left: 2px; top: 4.500px; width: 12px; height: 7px; border-radius: 50%; background: radial-gradient(circle, #4d4d4d 0 2px, #e8e8e8 2.500px); }
.c1 { background: #c83434; } .c2 { background: #7fc87f; } .c3 { background: #4d7fc4; } .c4 { background: #840084; }
.c5 { background: #000084; } .c6 { background: #a08c88; } .c7 { background: #00b2b2; } .c8 { background: #f2eda1; }
.c9 { background: #e8b2a7; } .c10 { background: #542d7e; } .c11 { background: #02727a; } .c12 { background: #c2c2c2; } .c13 { background: #5e94e8; }
.layer-scroll { width: 16px; flex: none; padding: 1px 2px 0 5px; background: #e8e7e5; }
.layer-thumb { height: 87px; border-radius: 4px; background: #8c8c8c; }
.disp-opts { height: 23px; flex: none; background: #fff; display: flex; align-items: center; padding: 1px 0 0 12px; font-size: 13px; color: #333; gap: 1px; }
.disp-arrow { border-left: 5px solid #222; border-top: 5px solid transparent; border-bottom: 5px solid transparent; }
.presets { height: 127px; flex: none; padding: 7px 8px 0 7px; font-size: 12px; }
.presets label { display: block; height: 16px; line-height: 16px; margin-bottom: 2px; }
.presets .lbl2 { margin-top: 5px; margin-bottom: 2px; }
.filters { flex: 1; display: grid; grid-template-columns: 107px 1fr; grid-auto-rows: 21px; padding: 5px 0 0 9px; font-size: 12px; }
.chk { display: flex; align-items: center; gap: 4px; white-space: nowrap; }
.cb { width: 16px; height: 16px; flex: none; border-radius: 4px; background: #fff; border: 1px solid #c4c3c1; }
.cb.on { background: #3d84e0; border-color: #3d84e0; position: relative; }
.cb.on::after { content: ""; position: absolute; left: 3px; top: 2px; width: 9px; height: 5px; border-left: 2.500px solid #fff; border-bottom: 2.500px solid #fff; transform: rotate(-45deg); }

/* bottom */
.msgpanel { height: 34px; flex: none; background: #efeeec; display: flex; font-size: 12.800px; color: #3a3a3a; position: relative; box-shadow: 0 -1px 0 #c4c3c1; }
.msg { display: flex; flex-direction: column; line-height: 17px; }
.m1 { width: 67px; margin-left: 13px; } .m2 { width: 65px; } .m3 { width: 140px; } .m4 { width: 67px; }
.status { height: 24px; flex: none; background: #f6f5f3; display: flex; align-items: center; font-size: 12.600px; color: #4a4a4a; white-space: nowrap; padding: 0 0 2px 5px; }
.s1 { width: 85px; } .s2 { width: 193px; } .s3 { width: 312px; } .s4 { width: 222px; } .s5 { width: 66px; }
.s6 { font-size: 12.900px; }
.taskbar { height: 30px; flex: none; background: #2b2e37; display: flex; align-items: center; color: #c9ccd2; font-size: 13.500px; position: relative; padding-left: 5px; }
.tk-logo { margin-right: 9px; flex: none; }
.ws { width: 24px; height: 26px; line-height: 26px; text-align: center; flex: none; font-size: 13.500px; color: #c4c7cc; }
.ws-on { width: 18px; margin-right: 3px; background: #363a44; font-weight: bold; }
.tk-fm { margin-left: 3px; flex: none; }
.tk-desk { margin-left: 7px; flex: none; }
.task { display: flex; align-items: center; gap: 3px; flex: none; height: 30px; white-space: nowrap; letter-spacing: .2px; }
.t-term { margin-left: 11px; width: 118px; }
.t-dir { width: 117px; }
.t-kicad { width: 120px; padding-left: 5px; margin-left: -5px; border-bottom: 2px solid #4a86d4; }
.t-brave { width: 118px; margin-left: 4px; }
.t-pdf { width: 115px; gap: 2px; }
.tray { display: flex; align-items: center; flex: 1; min-width: 0; }
.tr-eject { width: 16px; height: 20px; background: #7e7e7e; display: flex; flex-direction: column; align-items: center; justify-content: center; gap: 1px; flex: none; }
.tr-up { border-left: 5px solid transparent; border-right: 5px solid transparent; border-bottom: 5px solid #2b2e37; }
.tr-bar { width: 10px; height: 2px; background: #2b2e37; }
.tr-mute { margin-left: 12px; flex: none; }
.tr-green { margin-left: 15px; flex: none; }
.tr-clip { margin-left: 6px; flex: none; }
.tr-wifi { margin-left: 10px; flex: none; }
.tr-note { margin-left: 8px; flex: none; }
.clock { margin-left: auto; margin-right: 5px; letter-spacing: .2px; }
.ki { font-family: "DejaVu Sans", sans-serif; font-weight: bold; font-size: 14px; fill: #fff; text-anchor: middle; }
```
